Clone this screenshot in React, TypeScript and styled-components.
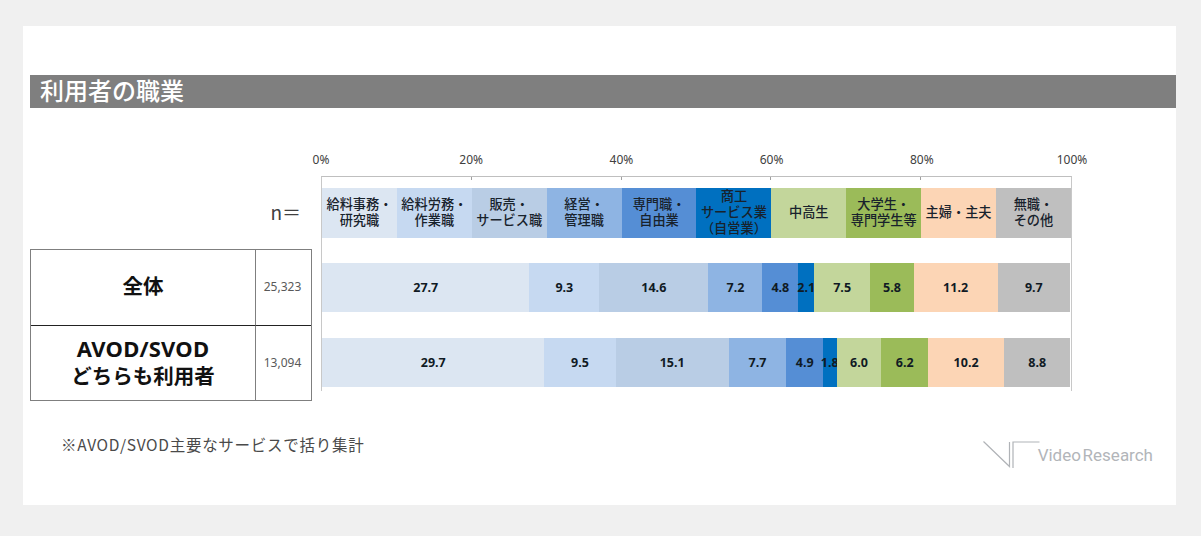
import React from "react";
import styled, { createGlobalStyle } from "styled-components";

const JP = `"Noto Sans CJK JP", "Noto Sans", sans-serif`;
const NUM = `"Noto Sans", "Noto Sans CJK JP", sans-serif`;

const Global = createGlobalStyle`
  html, body { margin: 0; padding: 0; background: #f0f0f0; }
  #root { width: 1201px; height: 536px; overflow: hidden; }
`;

const Slide = styled.main`
  width: 1153px;
  height: 479px;
  margin-left: 23px;
  position: relative;
  top: 26px;
  background: #fff;
  padding-top: 49px;
  box-sizing: border-box;
  font-family: ${JP};
`;

const TitleBar = styled.h1`
  margin: 0 0 0 7px;
  height: 33px;
  padding-left: 10px;
  background: #7f7f7f;
  color: #fff;
  font-size: 24px;
  font-weight: 500;
  line-height: 30px;
`;

const Content = styled.section`
  display: flex;
  margin: 43px 0 0 7px;
  align-items: flex-start;
`;

const LeftColumn = styled.div`
  width: 282px;
  margin-right: 9px;
  display: flex;
  flex-direction: column;
`;

const NLabel = styled.div`
  height: 27px;
  margin-top: 47px;
  margin-bottom: 24px;
  padding-right: 11px;
  text-align: right;
  font-size: 19px;
  line-height: 27px;
  color: #404040;
`;

const SampleTable = styled.div`
  display: grid;
  grid-template-columns: 225px 1fr;
  grid-template-rows: 75px 75px;
  border: 1px solid #7f7f7f;
`;

const GroupCell = styled.div<{ $top?: boolean }>`
  display: flex;
  flex-direction: column;
  align-items: center;
  justify-content: center;
  text-align: center;
  box-sizing: border-box;
  padding-bottom: 3px;
  border-right: 1px solid #7f7f7f;
  border-top: ${(p) => (p.$top ? "0" : "1px solid #222")};
  font-size: 20.5px;
  font-weight: 700;
  line-height: 26px;
  color: #111;
  font-family: ${NUM};
`;

const LatinLine = styled.span`
  font-size: 22px;
  letter-spacing: 0.2px;
  margin-bottom: 2px;
`;

const CountCell = styled.div<{ $top?: boolean }>`
  display: flex;
  align-items: center;
  justify-content: center;
  box-sizing: border-box;
  padding: 0 2px 2px 0;
  border-top: ${(p) => (p.$top ? "0" : "1px solid #222")};
  font-size: 12px;
  color: #595959;
  font-family: ${NUM};
`;

const Chart = styled.div`
  width: 751px;
`;

const AxisLabels = styled.div`
  display: flex;
  justify-content: space-between;
  height: 25px;
`;

const AxisLabel = styled.span`
  width: 0;
  display: flex;
  justify-content: center;
  white-space: nowrap;
  font-family: ${NUM};
  font-size: 12px;
  line-height: 18px;
  color: #404040;
`;

const Plot = styled.div`
  position: relative;
  box-sizing: border-box;
  height: 215px;
  padding-top: 11px;
  border-top: 1px solid #bfbfbf;
  border-left: 1px solid #c8c8c8;
  border-right: 1px solid #c8c8c8;
  display: flex;
  flex-direction: column;
  gap: 25.25px;
`;

const Tick = styled.i`
  position: absolute;
  top: 0;
  width: 1px;
  height: 3px;
  margin-left: -1px;
  background: #a0a0a0;
`;

const Bar = styled.div`
  display: flex;
  height: 49.5px;
`;

const Segment = styled.div<{ $color: string }>`
  background: ${(p) => p.$color};
  display: flex;
  align-items: center;
  justify-content: center;
  white-space: nowrap;
  min-width: 0;
`;

const LegendText = styled.span`
  font-size: 13.2px;
  font-weight: 500;
  line-height: 16px;
  text-align: center;
  margin-top: -2px;
  color: #18222c;
`;

const Value = styled.span`
  font-family: ${NUM};
  font-size: 12.5px;
  font-weight: 700;
  color: #101a24;
`;

const Footer = styled.footer`
  display: flex;
  justify-content: space-between;
  align-items: flex-start;
  padding: 0 23px 0 38px;
  margin-top: 6px;
`;

const Note = styled.p`
  margin: 26px 0 0;
  font-size: 15.5px;
  line-height: 22px;
  letter-spacing: 0.72px;
  color: #4a4a4a;
`;

const Logo = styled.div`
  display: flex;
  align-items: flex-start;
  margin-top: 34px;
`;

const LogoMark = styled.svg`
  width: 57px;
  height: 27px;
  display: block;
  margin-right: -2px;
`;

const LogoText = styled.span`
  font-family: Roboto, Inter, sans-serif;
  font-size: 17px;
  font-weight: 400;
  line-height: 28px;
  color: #b2b5b9;
  word-spacing: -2.5px;
  white-space: nowrap;
`;

const colors = ["#dce6f2", "#c6d9f1", "#b9cde5", "#8eb4e3", "#558ed5", "#0070c0", "#c3d69b", "#9bbb59", "#fcd5b5", "#bfbfbf"];

const legend = [
  ["給料事務・", "研究職"],
  ["給料労務・", "作業職"],
  ["販売・", "サービス職"],
  ["経営・", "管理職"],
  ["専門職・", "自由業"],
  ["商工", "サービス業", "（自営業）"],
  ["中高生"],
  ["大学生・", "専門学生等"],
  ["主婦・主夫"],
  ["無職・", "その他"],
];

const rows = [
  ["27.7", "9.3", "14.6", "7.2", "4.8", "2.1", "7.5", "5.8", "11.2", "9.7"],
  ["29.7", "9.5", "15.1", "7.7", "4.9", "1.8", "6.0", "6.2", "10.2", "8.8"],
];

export default function App() {
  return (
    <>
      <Global />
      <Slide>
        <TitleBar>利用者の職業</TitleBar>
        <Content>
          <LeftColumn>
            <NLabel>n＝</NLabel>
            <SampleTable>
              <GroupCell $top>全体</GroupCell>
              <CountCell $top>25,323</CountCell>
              <GroupCell>
                <LatinLine>AVOD/SVOD</LatinLine>
                <span>どちらも利用者</span>
              </GroupCell>
              <CountCell>13,094</CountCell>
            </SampleTable>
          </LeftColumn>
          <Chart>
            <AxisLabels>
              {["0%", "20%", "40%", "60%", "80%", "100%"].map((t) => (
                <AxisLabel key={t}>{t}</AxisLabel>
              ))}
            </AxisLabels>
            <Plot>
              {[20, 40, 60, 80].map((p) => (
                <Tick key={p} style={{ left: `${p}%` }} />
              ))}
              <Bar>
                {legend.map((lines, i) => (
                  <Segment key={i} $color={colors[i]} style={{ width: "10%" }}>
                    <LegendText>
                      {lines.map((l, j) => (
                        <React.Fragment key={j}>
                          {j > 0 && <br />}
                          {l}
                        </React.Fragment>
                      ))}
                    </LegendText>
                  </Segment>
                ))}
              </Bar>
              {rows.map((row, r) => (
                <Bar key={r}>
                  {row.map((v, i) => (
                    <Segment key={i} $color={colors[i]} style={{ width: `${v}%` }}>
                      <Value>{v}</Value>
                    </Segment>
                  ))}
                </Bar>
              ))}
            </Plot>
          </Chart>
        </Content>
        <Footer>
          <Note>※AVOD/SVOD主要なサービスで括り集計</Note>
          <Logo>
            <LogoMark viewBox="0 0 57 27" fill="none" stroke="#b0b3b7" strokeWidth="1.2">
              <path d="M0.5 0.5 L26.5 25.5 V1" />
              <path d="M30 27 V1 H56.5" />
            </LogoMark>
            <LogoText>Video Research</LogoText>
          </Logo>
        </Footer>
      </Slide>
    </>
  );
}
